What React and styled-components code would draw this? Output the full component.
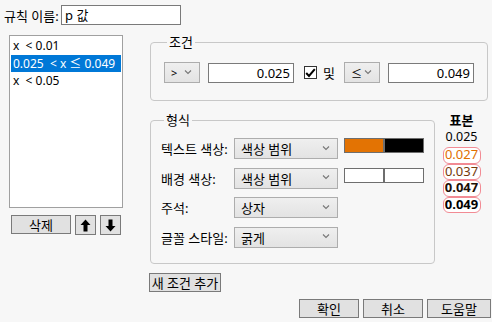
import React from 'react'
import styled, { createGlobalStyle } from 'styled-components'

const GlobalStyle = createGlobalStyle`
  html, body { margin: 0; padding: 0; background: #f7f7f7; }
  body { font-family: 'Noto Sans', 'Noto Sans CJK KR', sans-serif; font-size: 12px; color: #000; }
`

const Chevron = () => (
  <svg width="8" height="6" viewBox="0 0 8 6">
    <path d="M1 1.5 L4 4.5 L7 1.5" fill="none" stroke="#777" strokeWidth="1.1" />
  </svg>
)

const Arrow = ({ down }) => (
  <svg width="11" height="13" viewBox="0 0 11 13" style={{ transform: down ? 'rotate(180deg)' : 'none' }}>
    <path d="M5.5 0.5 L10.5 6 L7.5 6 L7.5 12.5 L3.5 12.5 L3.5 6 L0.5 6 Z" fill="#000" />
  </svg>
)

const Check = () => (
  <svg width="11" height="10" viewBox="0 0 11 10">
    <path d="M1.2 5 L4 8 L9.8 1.2" fill="none" stroke="#000" strokeWidth="2" />
  </svg>
)

const samples = [
  { v: '0.027', color: '#e07000', bold: false },
  { v: '0.037', color: '#74390a', bold: false },
  { v: '0.047', color: '#1c1008', bold: true },
  { v: '0.049', color: '#000', bold: true },
]

function App() {
  return (
    <Page>
      <GlobalStyle />
      <NameRow>
        <span>규칙 이름:</span>
        <TextBox $w={120}>p 값</TextBox>
      </NameRow>

      <Body>
        <LeftCol>
          <RuleList>
            <RuleItem>x  &lt; 0.01</RuleItem>
            <RuleItem $selected>0.025  &lt; x ≤ 0.049</RuleItem>
            <RuleItem>x  &lt; 0.05</RuleItem>
          </RuleList>
          <ListButtons>
            <Button $w={60}>삭제</Button>
            <IconButton><Arrow /></IconButton>
            <IconButton><Arrow down /></IconButton>
          </ListButtons>
        </LeftCol>

        <RightCol>
          <Group>
            <Legend>조건</Legend>
            <CondRow>
              <Select $w={36}><span>&gt;</span><Chevron /></Select>
              <TextBox $w={86} $right>0.025</TextBox>
              <CheckBox><Check /></CheckBox>
              <AndLabel>및</AndLabel>
              <Select $w={36}><span>≤</span><Chevron /></Select>
              <TextBox $w={86} $right>0.049</TextBox>
            </CondRow>
          </Group>

          <FormatRow>
            <FormatGroup>
              <Legend>형식</Legend>
              <FormatGrid>
                <FieldLabel>텍스트 색상:</FieldLabel>
                <Select $w={104} $big><span>색상 범위</span><Chevron /></Select>
                <Swatch><Half $c="#e37303" /><Half $c="#000" /></Swatch>

                <FieldLabel>배경 색상:</FieldLabel>
                <Select $w={104} $big><span>색상 범위</span><Chevron /></Select>
                <Swatch><Half $c="#fff" /><Half $c="#fff" /></Swatch>

                <FieldLabel>주석:</FieldLabel>
                <Select $w={104} $big><span>상자</span><Chevron /></Select>
                <span />

                <FieldLabel>글꼴 스타일:</FieldLabel>
                <Select $w={104} $big><span>굵게</span><Chevron /></Select>
                <span />
              </FormatGrid>
            </FormatGroup>

            <SampleCol>
              <SampleTitle>표본</SampleTitle>
              <SamplePlain>0.025</SamplePlain>
              {samples.map(s => (
                <SampleBox key={s.v} $color={s.color} $bold={s.bold}>{s.v}</SampleBox>
              ))}
            </SampleCol>
          </FormatRow>

          <AddRow>
            <Button $w={72}>새 조건 추가</Button>
          </AddRow>
        </RightCol>
      </Body>

      <Footer>
        <Button $w={60}>확인</Button>
        <Button $w={60}>취소</Button>
        <Button $w={64}>도움말</Button>
      </Footer>
    </Page>
  )
}

const Page = styled.div`
  width: 492px;
  height: 322px;
  background: #f7f7f7;
  display: flex;
  flex-direction: column;
  box-sizing: border-box;
  overflow: hidden;
`

const NameRow = styled.div`
  display: flex;
  align-items: center;
  padding: 5px 0 0 4px;
  font-size: 13px;
  span { width: 57px; }
`

const TextBox = styled.div`
  box-sizing: border-box;
  width: ${p => p.$w}px;
  height: 20px;
  background: #fff;
  border: 1px solid #7a7a7a;
  font-size: 13px;
  line-height: 18px;
  padding: 0 3px;
  text-align: ${p => (p.$right ? 'right' : 'left')};
`

const Body = styled.div`
  display: flex;
  margin-top: 10px;
`

const LeftCol = styled.div`
  display: flex;
  flex-direction: column;
  margin-left: 9px;
  width: 114px;
`

const RuleList = styled.div`
  box-sizing: border-box;
  height: 173px;
  background: #fff;
  border: 1px solid #a0a0a0;
  padding: 1px;
`

const RuleItem = styled.div`
  height: 17.5px;
  line-height: 17px;
  font-size: 12px;
  padding-left: 2px;
  white-space: pre;
  background: ${p => (p.$selected ? '#0078d7' : 'transparent')};
  color: ${p => (p.$selected ? '#fff' : '#000')};
`

const ListButtons = styled.div`
  display: flex;
  gap: 4px;
  margin-top: 7px;
  padding-left: 2px;
`

const Button = styled.div`
  box-sizing: border-box;
  width: ${p => p.$w}px;
  height: 19px;
  background: #e1e1e1;
  border: 1px solid #7a7a7a;
  display: flex;
  align-items: center;
  justify-content: center;
  font-size: 13px;
`

const IconButton = styled(Button)`
  width: 21px;
  height: 20px;
`

const RightCol = styled.div`
  display: flex;
  flex-direction: column;
  margin-left: 27px;
  width: 338px;
`

const Group = styled.fieldset`
  margin: 0;
  padding: 13px 12px 17px 13px;
  border: 1px solid #c8c8c8;
  border-radius: 4px;
  min-width: 0;
`

const Legend = styled.legend`
  font-size: 13px;
  line-height: 14px;
  padding: 0 2px;
  margin-left: 3px;
`

const CondRow = styled.div`
  display: flex;
  align-items: center;
  height: 21px;
`

const Select = styled.div`
  box-sizing: border-box;
  width: ${p => p.$w}px;
  height: 21px;
  margin-right: 8px;
  background: linear-gradient(#efefef, #e3e3e3);
  border: 1px solid #adadad;
  display: flex;
  align-items: center;
  justify-content: space-between;
  padding: 0 7px 0 6px;
  font-size: ${p => (p.$big ? '13px' : '11px')};
  svg { margin-top: -2px; }
`

const CheckBox = styled.div`
  box-sizing: border-box;
  width: 13px;
  height: 13px;
  margin-left: 10px;
  border: 1px solid #333;
  background: #fff;
  display: flex;
  align-items: center;
  justify-content: center;
`

const AndLabel = styled.span`
  font-size: 13px;
  margin: 0 9px 0 6px;
`

const FormatRow = styled.div`
  display: flex;
  margin-top: 12px;
`

const FormatGroup = styled(Group)`
  width: 285px;
  box-sizing: border-box;
  padding: 11px 10px 15px 10px;
`

const FormatGrid = styled.div`
  display: grid;
  grid-template-columns: 73px 104px 86px;
  row-gap: 8.5px;
  align-items: center;
  ${Select} { margin-right: 0; }
`

const FieldLabel = styled.span`
  font-size: 13px;
  align-self: start;
  margin-top: 1px;
`

const Swatch = styled.div`
  display: flex;
  height: 15px;
  margin-left: 6px;
  align-self: start;
  border: 1px solid #6e6e6e;
  box-sizing: border-box;
`

const Half = styled.div`
  flex: 1;
  background: ${p => p.$c};
  & + & { border-left: 2px solid #6e6e6e; }
`

const SampleCol = styled.div`
  display: flex;
  flex-direction: column;
  align-items: center;
  width: 53px;
  margin-top: -1px;
`

const SampleTitle = styled.div`
  font-size: 13px;
  font-weight: bold;
  height: 17px;
  line-height: 17px;
`

const SamplePlain = styled.div`
  font-size: 12.5px;
  height: 16px;
  line-height: 16px;
  margin-bottom: 2px;
`

const SampleBox = styled.div`
  box-sizing: border-box;
  width: 38px;
  height: 16.6px;
  line-height: 13px;
  text-align: center;
  font-size: 13px;
  border: 1.5px solid #f28b94;
  border-radius: 6px;
  background: #fff;
  color: ${p => p.$color};
  font-weight: ${p => (p.$bold ? 'bold' : 'normal')};
`

const AddRow = styled.div`
  display: flex;
  margin-top: 9px;
  margin-left: -1px;
`

const Footer = styled.div`
  display: flex;
  justify-content: flex-end;
  gap: 4px;
  padding-right: 1px;
  margin-top: 7px;
`

export default App
